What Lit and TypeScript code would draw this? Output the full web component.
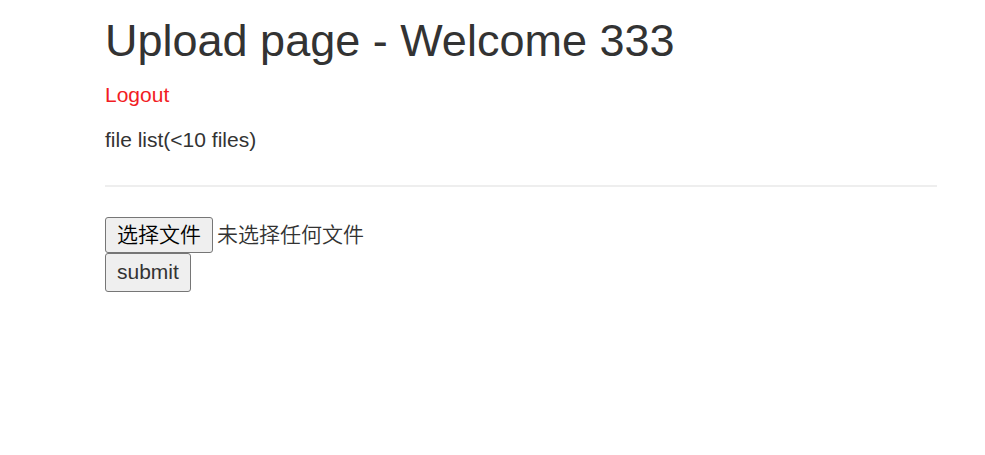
import { LitElement, html, css } from "lit";
import { customElement, property, query, state } from "lit/decorators.js";

@customElement("file-picker")
class FilePicker extends LitElement {
  static styles = css`
    :host {
      display: flex;
      align-items: center;
      gap: 4px;
      font-weight: 350;
    }
    .native {
      display: none;
    }
    .choose {
      height: 36px;
      padding: 0 11px;
      border: 1px solid #767676;
      border-radius: 3px;
      background: #efefef;
      color: #000;
      font: inherit;
      line-height: 34px;
    }
    .name {
      line-height: 36px;
    }
  `;

  @state() private fileName = "";
  @query(".native") private native!: HTMLInputElement;

  private onChange() {
    this.fileName = this.native.files?.[0]?.name ?? "";
  }

  render() {
    return html`
      <input class="native" id="file" type="file" aria-labelledby="choose" @change=${this.onChange} />
      <button class="choose" id="choose" type="button" @click=${() => this.native.click()}>选择文件</button>
      <label class="name" for="file">${this.fileName || "未选择任何文件"}</label>
    `;
  }
}

@customElement("app-root")
class AppRoot extends LitElement {
  static styles = css`
    :host {
      display: block;
      padding: 16px 48px 16px 105px;
      background: #fff;
      color: #333;
      font-family: "Liberation Sans", "Noto Sans CJK SC", sans-serif;
      font-size: 21px;
      line-height: 30px;
    }
    .title {
      margin: 0 0 15px;
      font-size: 45px;
      font-weight: 400;
      line-height: 49px;
    }
    .line {
      margin: 0 0 15px;
    }
    .logout {
      color: #f21c24;
      text-decoration: none;
    }
    .rule {
      margin: 30px 0;
      border: 0;
      border-top: 2px solid #eee;
    }
    .submit {
      display: block;
      padding: 3px 11px 4px;
      border: 1px solid #767676;
      border-radius: 3px;
      background: #efefef;
      color: #333;
      font: inherit;
    }
  `;

  @property() user = "333";

  render() {
    return html`
      <main>
        <h1 class="title">Upload page - Welcome ${this.user}</h1>
        <p class="line"><a class="logout" href="#logout">Logout</a></p>
        <p class="line">file list(&lt;10 files)</p>
        <hr class="rule" />
        <form @submit=${(e: Event) => e.preventDefault()}>
          <file-picker></file-picker>
          <button class="submit" type="submit">submit</button>
        </form>
      </main>
    `;
  }
}
